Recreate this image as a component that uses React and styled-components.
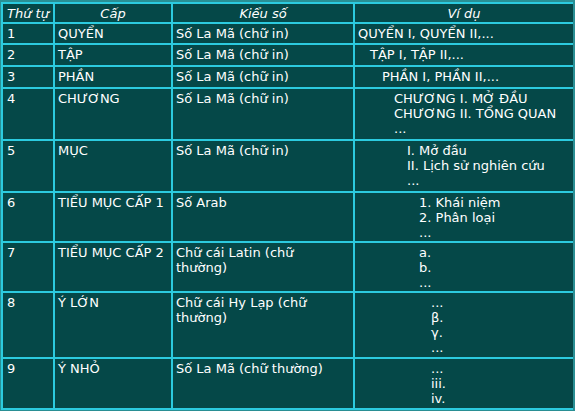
import React from 'react';
import styled, { createGlobalStyle } from 'styled-components';

const GlobalStyle = createGlobalStyle`
  html, body {
    margin: 0;
    padding: 0;
    background: #2a8f94;
  }
  body {
    font-family: "DejaVu Sans", Verdana, sans-serif;
  }
`;

const Page = styled.div`
  width: 575px;
  height: 411px;
  padding: 2px 0 0 1px;
  box-sizing: border-box;
`;

const Table = styled.div`
  display: grid;
  width: 572px;
  grid-template-columns: 50px 116px 180px 218px;
  grid-template-rows: 18px 19px 20px 20px 50px 50px 48px 48px 64px 49px;
  gap: 2px;
  padding: 2px;
  box-sizing: border-box;
  background: #2ccbdf;
`;

const Head = styled.div`
  background: #054848;
  color: #ffffff;
  font-size: 13px;
  font-style: italic;
  line-height: 15px;
  padding: 2px 0 0;
  text-align: center;
  white-space: nowrap;
`;

const Cell = styled.div`
  background: #054848;
  color: #ffffff;
  font-size: 13px;
  line-height: 15px;
  padding: 2px 0 0 ${(p) => (p.$indent ?? 4)}px;
  white-space: pre-line;
  overflow: hidden;
`;

const rows = [
  { no: '1', cap: 'QUYỂN', kieu: 'Số La Mã (chữ in)', vd: 'QUYỂN I, QUYỂN II,...', indent: 3 },
  { no: '2', cap: 'TẬP', kieu: 'Số La Mã (chữ in)', vd: 'TẬP I, TẬP II,...', indent: 15 },
  { no: '3', cap: 'PHẦN', kieu: 'Số La Mã (chữ in)', vd: 'PHẦN I, PHẦN II,...', indent: 27 },
  { no: '4', cap: 'CHƯƠNG', kieu: 'Số La Mã (chữ in)', vd: 'CHƯƠNG I. MỞ ĐẦU\nCHƯƠNG II. TỔNG QUAN\n...', indent: 39 },
  { no: '5', cap: 'MỤC', kieu: 'Số La Mã (chữ in)', vd: 'I. Mở đầu\nII. Lịch sử nghiên cứu\n...', indent: 52 },
  { no: '6', cap: 'TIỂU MỤC CẤP 1', kieu: 'Số Arab', vd: '1. Khái niệm\n2. Phân loại\n...', indent: 64 },
  { no: '7', cap: 'TIỂU MỤC CẤP 2', kieu: 'Chữ cái Latin (chữ\nthường)', vd: 'a.\nb.\n...', indent: 64 },
  { no: '8', cap: 'Ý LỚN', kieu: 'Chữ cái Hy Lạp (chữ\nthường)', vd: '...\nβ.\nγ.\n...', indent: 76 },
  { no: '9', cap: 'Ý NHỎ', kieu: 'Số La Mã (chữ thường)', vd: '...\niii.\niv.', indent: 76 },
];

const App = () => {
  return (
    <Page>
      <GlobalStyle />
      <Table>
        <Head>Thứ tự</Head>
        <Head>Cấp</Head>
        <Head>Kiểu số</Head>
        <Head>Ví dụ</Head>
        {rows.map((r) => (
          <React.Fragment key={r.no}>
            <Cell>{r.no}</Cell>
            <Cell $indent={3}>{r.cap}</Cell>
            <Cell $indent={3}>{r.kieu}</Cell>
            <Cell $indent={r.indent}>{r.vd}</Cell>
          </React.Fragment>
        ))}
      </Table>
    </Page>
  );
};

export default App;
